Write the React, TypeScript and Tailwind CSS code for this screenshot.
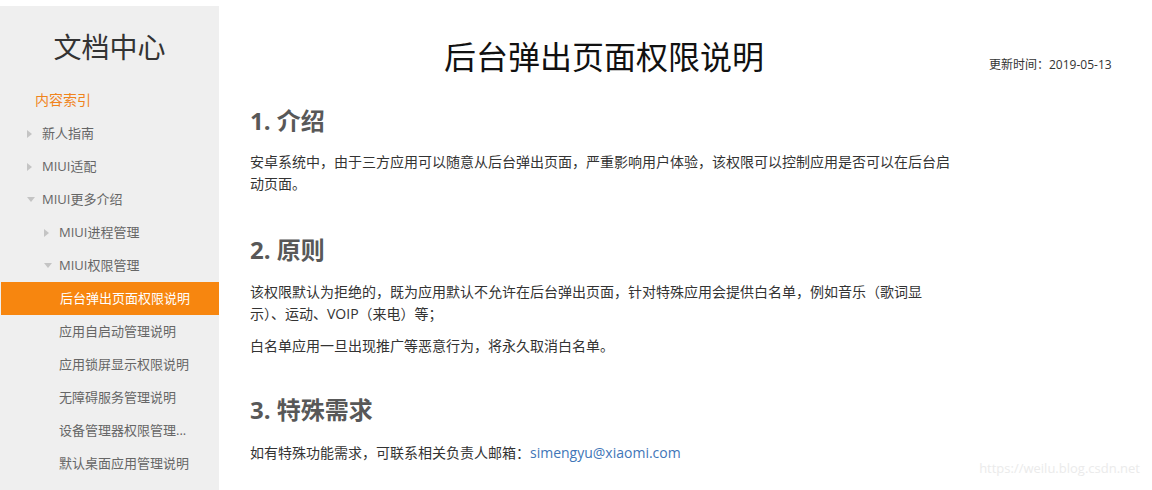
import React from 'react';

const FONT = "font-['Open_Sans','Noto_Sans_CJK_SC',sans-serif]";

type Item = { label: string; level: 1 | 2 | 3; arrow?: 'right' | 'down'; active?: boolean };

const items: Item[] = [
  { label: '新人指南', level: 1, arrow: 'right' },
  { label: 'MIUI适配', level: 1, arrow: 'right' },
  { label: 'MIUI更多介绍', level: 1, arrow: 'down' },
  { label: 'MIUI进程管理', level: 2, arrow: 'right' },
  { label: 'MIUI权限管理', level: 2, arrow: 'down' },
  { label: '后台弹出页面权限说明', level: 3, active: true },
  { label: '应用自启动管理说明', level: 3 },
  { label: '应用锁屏显示权限说明', level: 3 },
  { label: '无障碍服务管理说明', level: 3 },
  { label: '设备管理器权限管理...', level: 3 },
  { label: '默认桌面应用管理说明', level: 3 },
];

const Arrow = ({ dir }: { dir: 'right' | 'down' }) =>
  dir === 'right' ? (
    <span className="w-0 h-0 border-y-[4px] border-y-transparent border-l-[5px] border-l-[#c4c4c4]" />
  ) : (
    <span className="w-0 h-0 border-x-[4px] border-x-transparent border-t-[5px] border-t-[#c4c4c4]" />
  );

const Sidebar = () => (
  <aside className="w-[219px] shrink-0 mt-[6px] bg-[#efefef] pb-10">
    <h1 className="pt-[21px] h-[61px] text-center text-[28px] leading-[40px] text-[#333]">文档中心</h1>
    <div className="mt-[15px] h-[34px] flex items-center pl-[35px] text-[14px] text-[#f0841c]">内容索引</div>
    <ul className="mt-[1px]">
      {items.map((it) => (
        <li
          key={it.label}
          className={`h-[33px] flex items-center text-[13px] ${
            it.active ? 'bg-[#f7860f] text-white ml-[1px]' : 'text-[#666]'
          } ${it.level === 1 ? 'pl-[27px]' : it.level === 2 ? 'pl-[44px]' : 'pl-[59px]'}`}
        >
          {it.arrow ? (
            <span className="w-[15px] flex items-center">
              <Arrow dir={it.arrow} />
            </span>
          ) : null}
          <span>{it.label}</span>
        </li>
      ))}
    </ul>
  </aside>
);

const H2 = ({ children, className }: { children: React.ReactNode; className: string }) => (
  <h2 className={`${className} text-[24px] leading-[32px] font-bold text-[#585858]`}>{children}</h2>
);

const P = ({ children, className }: { children: React.ReactNode; className: string }) => (
  <p className={`${className} w-[720px] text-[14px] leading-[22px] text-[#333]`}>{children}</p>
);

export default function App() {
  return (
    <div className={`relative w-[1152px] h-[490px] overflow-hidden bg-white flex ${FONT}`}>
      <Sidebar />
      <main className="flex pl-[31px]">
        <div className="w-[708px]">
          <h1 className="pt-[37px] text-center text-[32px] leading-[40px] text-[#111]">后台弹出页面权限说明</h1>
          <H2 className="mt-[28px]">1. 介绍</H2>
          <P className="mt-[14px]">
            安卓系统中，由于三方应用可以随意从后台弹出页面，严重影响用户体验，该权限可以控制应用是否可以在后台启
            <br />
            动页面。
          </P>
          <H2 className="mt-[39px]">2. 原则</H2>
          <P className="mt-[15px]">
            该权限默认为拒绝的，既为应用默认不允许在后台弹出页面，针对特殊应用会提供白名单，例如音乐（歌词显
            <br />
            示）、运动、VOIP（来电）等；
          </P>
          <P className="mt-[10px]">白名单应用一旦出现推广等恶意行为，将永久取消白名单。</P>
          <H2 className="mt-[37px]">3. 特殊需求</H2>
          <P className="mt-[16px]">
            如有特殊功能需求，可联系相关负责人邮箱：
            <a className="text-[#4176b8]">simengyu@xiaomi.com</a>
          </P>
        </div>
        <div className="pl-[31px] pt-[56px] text-[12px] leading-[18px] text-[#333] whitespace-nowrap">
          更新时间：2019-05-13
        </div>
      </main>
      <div className="absolute right-[12px] bottom-[12px] text-[13px] text-[#ebebeb]">https://weilu.blog.csdn.net</div>
    </div>
  );
}
